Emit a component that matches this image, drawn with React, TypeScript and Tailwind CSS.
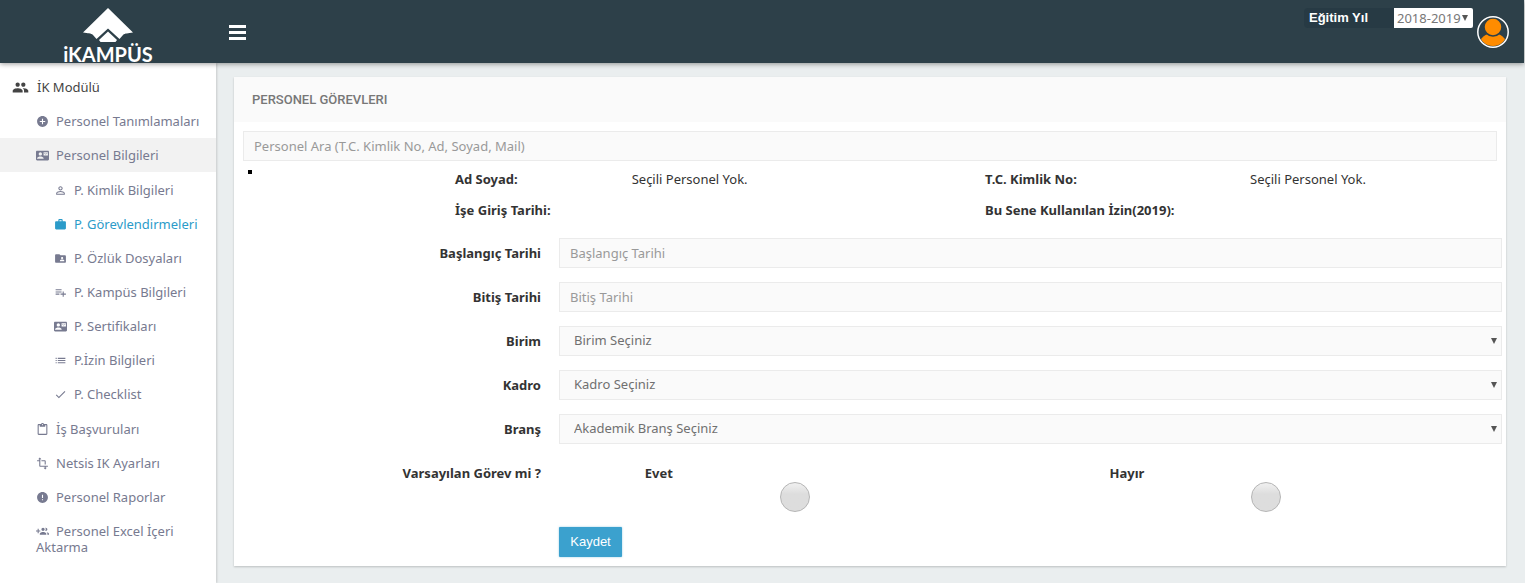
import { useState } from "react";
import type { ReactNode } from "react";
import type { IconType } from "react-icons";
import {
  MdAddCircle,
  MdContactMail,
  MdContentPaste,
  MdDone,
  MdError,
  MdFolderShared,
  MdGroup,
  MdList,
  MdPermIdentity,
  MdPlaylistAdd,
  MdTransform,
  MdWork,
} from "react-icons/md";

type MenuItem = {
  label: string;
  icon: IconType | (() => ReactNode);
  open?: boolean;
  children?: { label: string; icon: IconType; active?: boolean }[];
};

// group icon with the plus sign on the left side
const GroupAddIcon = () => (
  <svg viewBox="0 0 24 24" width="1em" height="1em" fill="currentColor">
    <path d="M8 10H5V7H3v3H0v2h3v3h2v-3h3v-2zm10 1c1.66 0 2.99-1.34 2.99-3S19.66 5 18 5c-.32 0-.63.05-.91.14.57.81.9 1.79.9 2.86s-.34 2.04-.9 2.86c.28.09.59.14.91.14zm-5 0c1.66 0 2.99-1.34 2.99-3S14.66 5 13 5c-1.66 0-3 1.34-3 3s1.34 3 3 3zm6.62 2.16c.83.73 1.38 1.66 1.38 2.84v2h3v-2c0-1.54-2.37-2.49-4.38-2.84zM13 13c-2 0-6 1-6 3v2h12v-2c0-2-4-3-6-3z" />
  </svg>
);

const menu: MenuItem[] = [
  { label: "Personel Tanımlamaları", icon: MdAddCircle },
  {
    label: "Personel Bilgileri",
    icon: MdContactMail,
    open: true,
    children: [
      { label: "P. Kimlik Bilgileri", icon: MdPermIdentity },
      { label: "P. Görevlendirmeleri", icon: MdWork, active: true },
      { label: "P. Özlük Dosyaları", icon: MdFolderShared },
      { label: "P. Kampüs Bilgileri", icon: MdPlaylistAdd },
      { label: "P. Sertifikaları", icon: MdContactMail },
      { label: "P.İzin Bilgileri", icon: MdList },
      { label: "P. Checklist", icon: MdDone },
    ],
  },
  { label: "İş Başvuruları", icon: MdContentPaste },
  { label: "Netsis IK Ayarları", icon: MdTransform },
  { label: "Personel Raporlar", icon: MdError },
  { label: "Personel Excel İçeri Aktarma", icon: GroupAddIcon },
];

const Header = () => (
  <header className="relative z-10 flex h-[63px] items-start bg-[#2d4049] shadow-[0_1px_5px_rgba(0,0,0,0.4)]">
    <a href="#" className="flex w-[216px] flex-col items-center pt-2" aria-label="iKampüs">
      <svg width="50" height="34" viewBox="0 0 50 34" fill="#fff">
        <path d="M25 0 L50 24.500 C45 25.500 42 25 40 27 L36.500 31 L25 20.500 L13.500 31 L10 27 C8 25 5 25.500 0 24.500 Z" />
        <path d="M25 23.500 L34 32 L32.500 34 H17.500 L16 32 Z" />
      </svg>
      <span className="font-['Lato'] text-[20px] leading-6 font-bold text-white">iKAMPÜS</span>
    </a>
    <button className="mt-[25px] ml-[13px] flex flex-col gap-[3px]" aria-label="Menü">
      <span className="h-[3px] w-[17px] bg-white" />
      <span className="h-[3px] w-[17px] bg-white" />
      <span className="h-[3px] w-[17px] bg-white" />
    </button>
    <div className="mt-2 ml-auto flex h-5 items-stretch">
      <label
        htmlFor="year"
        className="w-[90px] rounded-l-sm bg-[#273a44] pl-[5px] font-['Liberation_Sans'] text-[13px] leading-5 font-bold text-white"
      >
        Eğitim Yıl
      </label>
      <div className="relative">
        <select
          id="year"
          className="h-5 w-[79px] appearance-none rounded-r-[2px] bg-white pl-[3px] text-[13px] leading-5 text-[#777]"
        >
          <option>2018-2019</option>
        </select>
        <Arrow className="right-[5px]" />
      </div>
    </div>
    <button className="mt-4 mr-[15px] ml-1" aria-label="Profil">
      <svg width="32" height="32" viewBox="0 0 32 32">
        <clipPath id="avatar">
          <circle cx="16" cy="16" r="14" />
        </clipPath>
        <g clipPath="url(#avatar)" fill="#ff8c00">
          <ellipse cx="16" cy="29" rx="13.500" ry="12" />
          <circle cx="16" cy="11" r="9" stroke="#2d4049" strokeWidth="1.500" />
        </g>
        <circle cx="16" cy="16" r="15.200" fill="none" stroke="#fff" strokeWidth="1.500" />
      </svg>
    </button>
  </header>
);

const Arrow = ({ className }: { className: string }) => (
  <svg
    className={`pointer-events-none absolute top-1/2 h-[6px] w-[6px] -translate-y-1/2 ${className}`}
    viewBox="0 0 6 6"
    fill="#555"
  >
    <path d="M0 0 H6 L3 6 Z" />
  </svg>
);

const Sidebar = () => (
  <nav className="w-[216px] shrink-0 bg-white pt-[7px] text-[13px] leading-4 text-[#777a90] shadow-[1px_0_2px_rgba(0,0,0,0.15)]">
    <a href="#" className="flex h-[34px] items-center pl-3 text-[#444]">
      <MdGroup className="mr-2 text-[17px]" />
      İK Modülü
    </a>
    <ul>
      {menu.map((item) => (
        <li key={item.label}>
          <a
            href="#"
            className={`block py-[9px] pr-3 pl-9 ${item.open ? "bg-[#f2f2f2]" : ""}`}
          >
            <span className="mr-[7px] inline-block align-[-2px] text-[13px] [&>svg]:block">
              <item.icon />
            </span>
            {item.label}
          </a>
          {item.children && (
            <ul className="py-px">
              {item.children.map((child) => (
                <li key={child.label}>
                  <a
                    href="#"
                    className={`flex h-[34px] items-center pl-[54px] ${
                      child.active ? "text-[#2b9bc9]" : ""
                    }`}
                  >
                    <child.icon className="mr-[7px] text-[13px]" />
                    {child.label}
                  </a>
                </li>
              ))}
            </ul>
          )}
        </li>
      ))}
    </ul>
  </nav>
);

const Field = ({ label, id, children }: { label: string; id?: string; children: ReactNode }) => (
  <div className="mb-[14px] flex">
    <label htmlFor={id} className="w-1/4 pr-[11px] text-right leading-[30px] font-bold">
      {label}
    </label>
    <div className="relative flex-1 pr-1 pl-[7px]">{children}</div>
  </div>
);

const inputClass =
  "block h-[30px] w-full border border-[#ebebeb] bg-[#fafafa] px-[10px] text-[13px] placeholder:text-[#999]";

const SelectField = ({ label, id, text }: { label: string; id: string; text: string }) => (
  <Field label={label} id={id}>
    <select
      id={id}
      className="block h-[30px] w-full appearance-none border border-[#ebebeb] bg-[#fafafa] pl-[14px] text-[13px] text-[#707070]"
    >
      <option>{text}</option>
    </select>
    <Arrow className="right-[9px]" />
  </Field>
);

const RadioOption = ({
  label,
  id,
  checked,
  onChange,
}: {
  label: string;
  id: string;
  checked: boolean;
  onChange: () => void;
}) => (
  <div className="flex w-1/2 flex-col">
    <label htmlFor={id} className="w-1/4 pt-[6px] pr-1 text-right leading-[18px] font-bold">
      {label}
    </label>
    <input
      type="radio"
      id={id}
      name="varsayilan"
      checked={checked}
      onChange={onChange}
      className="mx-auto h-[30px] w-[30px] appearance-none rounded-full border border-[#b5b5b5] bg-linear-to-b from-[#eee] from-5% via-[#ddd] via-40% to-[#ddd] checked:border-[#2b9bc9]"
    />
  </div>
);

const App = () => {
  const [isDefault, setIsDefault] = useState<boolean | null>(null);

  return (
    <div className="flex min-h-screen flex-col bg-[#eaeeef] pr-px font-['Noto_Sans',sans-serif] text-[13px] text-[#333]">
      <Header />
      <div className="flex flex-1">
        <Sidebar />
        <main className="flex-1 pt-[14px] pr-[18px] pb-4 pl-[18px]">
          <section className="bg-white shadow-[0_1px_2px_rgba(0,0,0,0.2)]">
            <h1 className="bg-[#fafafa] pl-[18px] font-['Roboto'] text-[13px] leading-[45px] font-medium text-[#777]">
              PERSONEL GÖREVLERI
            </h1>
            <div className="px-[9px] pt-[9px]">
              <input
                type="text"
                aria-label="Personel Ara"
                placeholder="Personel Ara (T.C. Kimlik No, Ad, Soyad, Mail)"
                className={inputClass}
              />
            </div>
            <div className="flex pt-[3px] pb-3">
              <div className="w-1/6 pt-[6px] pl-[14px]">
                <div className="h-1 w-1 bg-black" />
              </div>
              <dl className="grid w-5/6 grid-cols-[2fr_4fr_3fr_3fr] leading-[31px] [&>*]:pl-[9px]">
                <dt className="font-bold">Ad Soyad:</dt>
                <dd>Seçili Personel Yok.</dd>
                <dt className="font-bold">T.C. Kimlik No:</dt>
                <dd>Seçili Personel Yok.</dd>
                <dt className="font-bold">İşe Giriş Tarihi:</dt>
                <dd />
                <dt className="font-bold">Bu Sene Kullanılan İzin(2019):</dt>
                <dd />
              </dl>
            </div>
            <form onSubmit={(e) => e.preventDefault()} className="pb-[9px]">
              <Field label="Başlangıç Tarihi" id="start">
                <input id="start" type="text" placeholder="Başlangıç Tarihi" className={inputClass} />
              </Field>
              <Field label="Bitiş Tarihi" id="end">
                <input id="end" type="text" placeholder="Bitiş Tarihi" className={inputClass} />
              </Field>
              <SelectField label="Birim" id="unit" text="Birim Seçiniz" />
              <SelectField label="Kadro" id="staff" text="Kadro Seçiniz" />
              <SelectField label="Branş" id="branch" text="Akademik Branş Seçiniz" />
              <Field label="Varsayılan Görev mi ?">
                <div className="flex">
                  <RadioOption
                    label="Evet"
                    id="yes"
                    checked={isDefault === true}
                    onChange={() => setIsDefault(true)}
                  />
                  <RadioOption
                    label="Hayır"
                    id="no"
                    checked={isDefault === false}
                    onChange={() => setIsDefault(false)}
                  />
                </div>
              </Field>
              <div className="pt-px pl-[25%]">
                <button
                  type="submit"
                  className="ml-[7px] block h-[30px] w-[63px] rounded-[1px] bg-[#3ba1ce] font-['Liberation_Sans'] text-[13px] text-white shadow-[0_0_2px_rgba(59,161,206,0.6)]"
                >
                  Kaydet
                </button>
              </div>
            </form>
          </section>
        </main>
      </div>
    </div>
  );
};

export default App;
